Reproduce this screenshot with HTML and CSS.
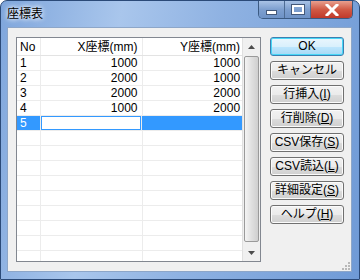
FILE: index.html
```html
<!DOCTYPE html>
<html lang="ja">
<head>
<meta charset="UTF-8">
<title>座標表</title>
<link rel="stylesheet" href="styles.css">
</head>
<body>
<div class="window">
  <div class="titlebar">
    <span class="title">座標表</span>
    <div class="caption-buttons">
      <div class="cap cap-min"><span class="min-bar"></span></div>
      <div class="cap cap-max"><span class="max-box"></span></div>
      <div class="cap cap-close">
        <svg width="14" height="12" viewBox="0 0 14 12">
          <path d="M2 1 L12 11 M12 1 L2 11" stroke="#fff" stroke-width="3" stroke-linecap="square"/>
        </svg>
      </div>
    </div>
  </div>
  <div class="client">
    <div class="grid">
      <div class="cells">
        <div class="row head">
          <div class="c c-no">No</div>
          <div class="c c-x">X座標(mm)</div>
          <div class="c c-y">Y座標(mm)</div>
        </div>
        <div class="row"><div class="c c-no">1</div><div class="c c-x">1000</div><div class="c c-y">1000</div></div>
        <div class="row"><div class="c c-no">2</div><div class="c c-x">2000</div><div class="c c-y">1000</div></div>
        <div class="row"><div class="c c-no">3</div><div class="c c-x">2000</div><div class="c c-y">2000</div></div>
        <div class="row"><div class="c c-no">4</div><div class="c c-x">1000</div><div class="c c-y">2000</div></div>
        <div class="row selected"><div class="c c-no">5</div><div class="c c-x"><span class="edit"></span></div><div class="c c-y"></div></div>
        <div class="row"><div class="c c-no"></div><div class="c c-x"></div><div class="c c-y"></div></div>
        <div class="row"><div class="c c-no"></div><div class="c c-x"></div><div class="c c-y"></div></div>
        <div class="row"><div class="c c-no"></div><div class="c c-x"></div><div class="c c-y"></div></div>
        <div class="row"><div class="c c-no"></div><div class="c c-x"></div><div class="c c-y"></div></div>
        <div class="row"><div class="c c-no"></div><div class="c c-x"></div><div class="c c-y"></div></div>
        <div class="row"><div class="c c-no"></div><div class="c c-x"></div><div class="c c-y"></div></div>
        <div class="row"><div class="c c-no"></div><div class="c c-x"></div><div class="c c-y"></div></div>
        <div class="row"><div class="c c-no"></div><div class="c c-x"></div><div class="c c-y"></div></div>
        <div class="row"><div class="c c-no"></div><div class="c c-x"></div><div class="c c-y"></div></div>
      </div>
      <div class="scrollbar">
        <div class="arrow">
          <svg width="7" height="4" viewBox="0 0 7 4"><path d="M0 4 L3.5 0 L7 4 Z" fill="#4d4d4d"/></svg>
        </div>
        <div class="thumb"></div>
        <div class="arrow">
          <svg width="7" height="4" viewBox="0 0 7 4"><path d="M0 0 L3.5 4 L7 0 Z" fill="#4d4d4d"/></svg>
        </div>
      </div>
    </div>
    <div class="buttons">
      <button class="btn default">OK</button>
      <button class="btn">キャンセル</button>
      <button class="btn">行挿入(<u>I</u>)</button>
      <button class="btn">行削除(<u>D</u>)</button>
      <button class="btn">CSV保存(<u>S</u>)</button>
      <button class="btn">CSV読込(<u>L</u>)</button>
      <button class="btn">詳細設定(<u>S</u>)</button>
      <button class="btn">ヘルプ(<u>H</u>)</button>
    </div>
    <div class="grip">
      <svg width="8" height="8" viewBox="0 0 8 8">
        <g fill="#b8b8b8">
          <rect x="6" y="0" width="2" height="2"/>
          <rect x="3" y="3" width="2" height="2"/><rect x="6" y="3" width="2" height="2"/>
          <rect x="0" y="6" width="2" height="2"/><rect x="3" y="6" width="2" height="2"/><rect x="6" y="6" width="2" height="2"/>
        </g>
      </svg>
    </div>
  </div>
</div>
</body>
</html>
```

FILE: styles.css
```css
body {
  margin: 0;
  padding: 0;
  font-family: "Liberation Sans", "Noto Sans CJK JP", sans-serif;
  font-size: 12px;
  color: #000;
  background: #fff;
}
.window {
  width: 360px;
  height: 280px;
  box-sizing: border-box;
  border: 1px solid #2b4a78;
  border-radius: 7px 7px 0 0;
  background: linear-gradient(100deg, #7fa6dc 0%, #a9c6ec 30%, #8fb2e2 55%, #6f9ad6 100%);
  display: flex;
  flex-direction: column;
  overflow: hidden;
}
.titlebar {
  height: 26px;
  display: flex;
  align-items: flex-start;
  justify-content: space-between;
  padding-left: 6px;
}
.title {
  margin-top: 3px;
  font-family: "Noto Sans CJK JP", sans-serif;
  font-size: 12px;
  line-height: 18px;
  text-shadow: 0 0 4px #fff, 0 0 6px #fff;
}
.caption-buttons {
  display: flex;
  margin-right: 6px;
  border: 1px solid #3b5a82;
  border-top: none;
  border-radius: 0 0 5px 5px;
  overflow: hidden;
  height: 17px;
}
.cap {
  display: flex;
  align-items: center;
  justify-content: center;
  height: 17px;
}
.cap-min, .cap-max {
  width: 25px;
  background: linear-gradient(#a9c3e6, #7d9fcf 50%, #6e92c6 100%);
  border-right: 1px solid #4e6c94;
}
.min-bar {
  width: 9px;
  height: 3px;
  margin-top: 5px;
  background: #fff;
  border: 1px solid #44597a;
}
.max-box {
  width: 8px;
  height: 5px;
  border: 2px solid #fff;
  outline: 1px solid #44597a;
}
.cap-close {
  width: 41px;
  background: linear-gradient(#e8a08f, #d15a45 50%, #c0392a 100%);
}
.client {
  flex: 1;
  margin: 0 7px 7px 6px;
  background: #f0f0f0;
  border: 1px solid #8da6c8;
  display: flex;
  padding: 9px 0 0 8px;
  position: relative;
}
.grid {
  width: 243px;
  height: 223px;
  border: 1px solid #828790;
  background: #fff;
  display: flex;
  overflow: hidden;
}
.cells {
  width: 226px;
  overflow: hidden;
}
.row {
  display: flex;
  height: 15px;
  border-bottom: 1px solid #ececec;
  box-sizing: border-box;
  line-height: 14px;
}
.row.head {
  height: 18px;
  line-height: 18px;
  border-bottom: 1px solid #e3e3e3;
  background: #fff;
}
.c {
  box-sizing: border-box;
  border-right: 1px solid #ececec;
  padding: 0 4px;
  white-space: nowrap;
}
.c-no {
  width: 24px;
  padding-left: 3px;
}
.c-x {
  width: 102px;
  text-align: right;
}
.c-y {
  width: 100px;
  text-align: right;
  border-right: none;
  padding-right: 2px;
}
.selected .c-no, .selected .c-y {
  background: #3399ff;
  color: #fff;
}
.selected .c-x {
  padding: 0;
}
.edit {
  display: block;
  height: 12px;
  border: 1px solid #3399ff;
  background: #fff;
}
.scrollbar {
  width: 17px;
  background: #f0f0f0;
  border-left: 1px solid #e0e0e0;
  display: flex;
  flex-direction: column;
}
.arrow {
  height: 17px;
  display: flex;
  align-items: center;
  justify-content: center;
}
.thumb {
  flex: 1;
  margin: 1px 1px 2px 1px;
  border: 1px solid #9a9a9a;
  border-radius: 2px;
  background: linear-gradient(90deg, #f4f4f4, #e0e0e0 50%, #cfcfcf);
}
.buttons {
  margin-left: 9px;
  display: flex;
  flex-direction: column;
  gap: 5px;
}
.btn {
  width: 74px;
  height: 19px;
  padding: 0;
  font-family: "Liberation Sans", "Noto Sans CJK JP", sans-serif;
  font-size: 12px;
  line-height: 15px;
  color: #000;
  border: 1px solid #707070;
  border-radius: 3px;
  background: linear-gradient(#f2f2f2 0%, #ebebeb 50%, #dddddd 51%, #cfcfcf 100%);
  box-shadow: inset 0 0 0 1px #fbfbfb;
}
.btn.default {
  border-color: #3c7fb1;
  background: linear-gradient(#eaf6fd 0%, #d9f0fc 50%, #bee6fd 51%, #a7d9f5 100%);
  box-shadow: inset 0 0 0 1px #48d7f7;
}
.btn u {
  text-underline-offset: 1px;
}
.grip {
  position: absolute;
  right: 1px;
  bottom: 1px;
  line-height: 0;
}
```
